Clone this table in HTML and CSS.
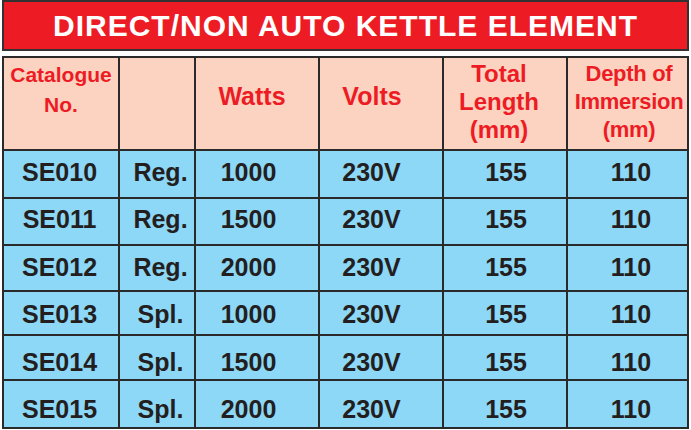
FILE: index.html
```html
<!DOCTYPE html>
<html>
<head>
<meta charset="utf-8">
<link rel="stylesheet" href="styles.css">
</head>
<body>
<div class="page">
  <div class="title">DIRECT/NON AUTO KETTLE ELEMENT</div>
  <div class="grid">
    <div class="hd h1">Catalogue<br>No.</div>
    <div class="hd h2"></div>
    <div class="hd h3">Watts</div>
    <div class="hd h4">Volts</div>
    <div class="hd h5">Total<br>Length<br>(mm)</div>
    <div class="hd h6">Depth of<br>Immersion<br>(mm)</div>

    <div class="cell r1 c1">SE010</div><div class="cell r1 c2">Reg.</div><div class="cell r1 c3">1000</div><div class="cell r1 c4">230V</div><div class="cell r1 c5">155</div><div class="cell r1 c6">110</div>
    <div class="cell r2 c1">SE011</div><div class="cell r2 c2">Reg.</div><div class="cell r2 c3">1500</div><div class="cell r2 c4">230V</div><div class="cell r2 c5">155</div><div class="cell r2 c6">110</div>
    <div class="cell r3 c1">SE012</div><div class="cell r3 c2">Reg.</div><div class="cell r3 c3">2000</div><div class="cell r3 c4">230V</div><div class="cell r3 c5">155</div><div class="cell r3 c6">110</div>
    <div class="cell r4 c1">SE013</div><div class="cell r4 c2">Spl.</div><div class="cell r4 c3">1000</div><div class="cell r4 c4">230V</div><div class="cell r4 c5">155</div><div class="cell r4 c6">110</div>
    <div class="cell r5 c1">SE014</div><div class="cell r5 c2">Spl.</div><div class="cell r5 c3">1500</div><div class="cell r5 c4">230V</div><div class="cell r5 c5">155</div><div class="cell r5 c6">110</div>
    <div class="cell r6 c1">SE015</div><div class="cell r6 c2">Spl.</div><div class="cell r6 c3">2000</div><div class="cell r6 c4">230V</div><div class="cell r6 c5">155</div><div class="cell r6 c6">110</div>
  </div>
</div>
</body>
</html>
```

FILE: styles.css
```css
html, body {
  margin: 0;
  padding: 0;
  background: #ffffff;
}
body {
  font-family: "Liberation Sans", Arial, sans-serif;
  font-weight: bold;
}
.page {
  width: 687px;
  padding: 0 2px;
}
.title {
  box-sizing: border-box;
  height: 51px;
  border: 2px solid #333132;
  background: #ed1c24;
  color: #ffffff;
  font-size: 30px;
  letter-spacing: 1px;
  display: flex;
  align-items: center;
  justify-content: center;
  white-space: nowrap;
}
.grid {
  margin-top: 5px;
  display: grid;
  grid-template-columns: 114px 74px 122px 122px 122px 119px;
  grid-template-rows: 91px 46px 45px 44px 42px 43px 46px;
  gap: 2px;
  padding: 2px;
  background: #2b2a2b;
}
.hd {
  background: #fcd3c0;
  color: #ed1c24;
  text-align: center;
  box-sizing: border-box;
}
.h1 {
  font-size: 21px;
  line-height: 30px;
  padding-top: 2px;
}
.h3, .h4 {
  font-size: 25px;
  line-height: 30px;
  padding-top: 23px;
}
.h3 { padding-right: 10px; }
.h4 { padding-right: 18px; }
.h5 {
  font-size: 24px;
  line-height: 28px;
  padding-top: 2px;
  padding-right: 12px;
}
.h6 {
  font-size: 22px;
  line-height: 28px;
  letter-spacing: -0.3px;
  padding-top: 2px;
  padding-left: 3px;
}
.cell {
  background: #8dd7f7;
  color: #231f20;
  font-size: 25px;
  line-height: 25px;
  text-align: center;
  box-sizing: border-box;
}
.r1 { padding-top: 9px; }
.r2 { padding-top: 8px; }
.r3 { padding-top: 9px; }
.r4 { padding-top: 10px; }
.r5 { padding-top: 14px; }
.r6 { padding-top: 16px; }
.c1 { padding-right: 3px; }
.c2 { padding-left: 7px; }
.c3 { padding-right: 17px; }
.c4 { padding-right: 19px; }
.c5 { padding-left: 2px; }
.c6 { padding-left: 7px; }
```
